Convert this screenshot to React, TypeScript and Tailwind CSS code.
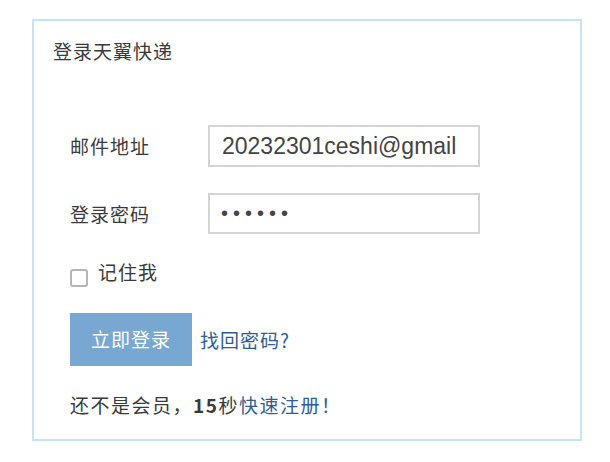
import React from "react";

const cjk = { fontFamily: '"Noto Sans CJK SC", "Noto Sans", sans-serif' };

export default function App() {
  return (
    <div className="w-[610px] h-[462px] bg-white pt-[19px] pl-[32px]">
      <div className="w-[550px] h-[422px] border-2 border-[#c6e2fb] bg-white">
        <div
          className="mt-[16px] ml-[19px] text-[19px] leading-[28px] tracking-[1px] text-[#3a3a3a]"
          style={cjk}
        >
          登录天翼快递
        </div>

        <div className="pl-[36px]">
          <div className="mt-[60px] flex items-center">
            <div
              className="w-[138px] text-[19px] leading-[28px] tracking-[1px] text-[#3a3a3a]"
              style={cjk}
            >
              邮件地址
            </div>
            <input
              readOnly
              defaultValue="20232301ceshi@gmail"
              className="w-[272px] h-[42px] border-2 border-[#d4d4d4] pl-[12px] text-[23px] text-[#444] outline-none"
              style={{ fontFamily: '"Liberation Sans", Arial, sans-serif' }}
            />
          </div>

          <div className="mt-[26px] flex items-center">
            <div
              className="w-[138px] text-[19px] leading-[28px] tracking-[1px] text-[#3a3a3a]"
              style={cjk}
            >
              登录密码
            </div>
            <input
              readOnly
              type="password"
              defaultValue="123456"
              className="w-[272px] h-[41px] border-2 border-[#d4d4d4] pl-[11px] text-[20px] tracking-[5px] text-[#444] outline-none"
              style={{ fontFamily: '"Liberation Sans", Arial, sans-serif' }}
            />
          </div>

          <div className="mt-[26px] flex items-start h-[28px]">
            <span className="mt-[9px] w-[18px] h-[18px] border-2 border-[#b5b5b5] rounded-[3px] bg-white" />
            <span
              className="ml-[10px] text-[19px] leading-[24px] tracking-[1px] text-[#3a3a3a]"
              style={cjk}
            >
              记住我
            </span>
          </div>

          <div className="mt-[25px] flex items-center">
            <div
              className="w-[122px] h-[53px] bg-[#78a7d1] flex items-center justify-center text-white text-[19px] tracking-[1px]"
              style={cjk}
            >
              立即登录
            </div>
            <span
              className="ml-[8px] text-[19px] leading-[24px] tracking-[1px] text-[#2f5d97]"
              style={cjk}
            >
              找回密码?
            </span>
          </div>

          <div
            className="mt-[27px] text-[19px] leading-[24px] tracking-[1.5px] text-[#3a3a3a]"
            style={cjk}
          >
            还不是会员，<span className="font-bold">15</span>秒
            <span className="text-[#2f5d97]">快速注册！</span>
          </div>
        </div>
      </div>
    </div>
  );
}
